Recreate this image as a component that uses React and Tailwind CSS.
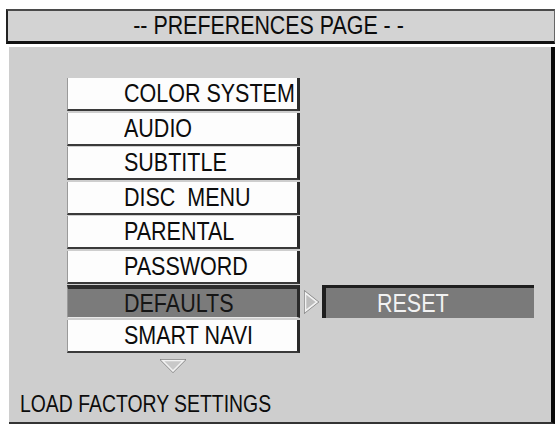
import React from "react";

const items = [
  "COLOR SYSTEM",
  "AUDIO",
  "SUBTITLE",
  "DISC  MENU",
  "PARENTAL",
  "PASSWORD",
  "DEFAULTS",
  "SMART NAVI",
];

function Txt({ children, className = "" }) {
  return (
    <span className={"inline-block scale-y-[1.22] origin-center whitespace-pre leading-none " + className}>
      {children}
    </span>
  );
}

export default function App() {
  return (
    <div
      className="w-[556px] h-[426px] bg-white pt-[9px] pl-[6px] overflow-hidden"
      style={{ fontFamily: '"Liberation Sans", Arial, sans-serif' }}
    >
      {/* Header */}
      <div className="w-[549px] h-[35px] bg-[#d3d3d3] border-t-2 border-l-2 border-b-[3px] border-r border-t-[#4a4a4a] border-l-[#222] border-b-[#111] border-r-[#666] flex items-center justify-center text-[21.4px] text-[#0c0c0c]">
        <Txt className="ml-[-25px] mt-[2px]">-- PREFERENCES PAGE - -</Txt>
      </div>

      {/* Body */}
      <div className="mt-[3px] ml-[3px] w-[546px] h-[377px] bg-[#cecece] border-r-[4px] border-r-[#0a0a0a] border-b-2 border-b-[#333] flex flex-col pt-[31px]">
        <div className="flex flex-col gap-[1.5px] pl-[58px]">
          {items.map((label) => {
            const sel = label === "DEFAULTS";
            return (
              <div key={label} className="flex items-stretch h-[33px]">
                <div
                  className={
                    "w-[233px] flex items-center pl-[56px] text-[21.5px] border-r-[3px] border-r-[#2a2a2a] border-l border-l-[#9a9a9a] " +
                    (sel
                      ? "bg-[#7b7b7b] text-[#151515] border-t-[4px] border-t-[#2e2e2e] border-b border-b-[#e8e8e8]"
                      : "bg-[#fdfdfd] text-[#0c0c0c] border-b-2 border-b-[#3a3a3a]")
                  }
                >
                  <Txt className="mt-[3px]">{label}</Txt>
                </div>
                {sel && (
                  <>
                    <div className="w-[22px] flex items-center justify-center">
                      <svg width="16" height="24" viewBox="0 0 16 24">
                        <polygon points="2.5,3 14,12 2.5,21" fill="#a9a9a9" stroke="#7e7e7e" strokeWidth="3" strokeLinejoin="miter" />
                        <polygon points="2.5,3 14,12 2.5,21" fill="#bdbdbd" stroke="#f2f2f2" strokeWidth="1.6" strokeLinejoin="miter" />
                      </svg>
                    </div>
                    <div className="w-[212px] bg-[#7a7a7a] border-t-[3px] border-t-[#1e1e1e] border-l-[4px] border-l-[#1e1e1e] flex items-center pl-[51px] text-[21.5px] text-[#f2f2f2]">
                      <Txt className="mt-[3px]">RESET</Txt>
                    </div>
                  </>
                )}
              </div>
            );
          })}
        </div>

        <div className="pl-[151px] mt-[5px]">
          <svg width="26" height="16" viewBox="0 0 26 16">
            <polygon points="2.5,2.5 23.5,2.5 13,13" fill="#b8b8b8" stroke="#7c7c7c" strokeWidth="3" />
            <polygon points="2.5,2.5 23.5,2.5 13,13" fill="#c8c8c8" stroke="#f2f2f2" strokeWidth="1.6" />
          </svg>
        </div>

        <div className="pl-[11px] mt-[16px] text-[19.4px] text-[#0c0c0c]">
          <Txt>LOAD FACTORY SETTINGS</Txt>
        </div>
      </div>
    </div>
  );
}
